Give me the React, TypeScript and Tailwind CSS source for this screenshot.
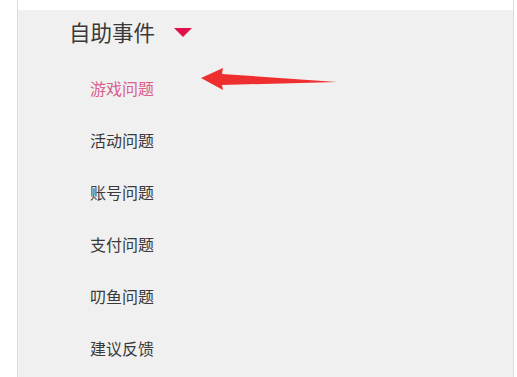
const items = ["游戏问题", "活动问题", "账号问题", "支付问题", "叨鱼问题", "建议反馈"];

export default function App() {
  return (
    <div
      className="h-[377px] w-[517px] overflow-hidden bg-white"
      style={{ fontFamily: '"Noto Sans CJK SC", "Liberation Sans", sans-serif' }}
    >
      <div className="ml-[17px] mr-[3px] flex h-full border-x border-[#dcdcdc] pt-[10px]">
        <div className="relative flex-1 bg-[#f0f0f0] pl-[51px]">
          {/* heading */}
          <div className="flex h-[44px] items-center gap-[19px]">
            <span className="text-[21.5px] text-[#3a3a3a]">自助事件</span>
            <svg width="18" height="10" viewBox="0 0 18 10" className="mt-[2px]">
              <polygon points="0,0 18,0 9,9" fill="#e0104a" />
            </svg>
          </div>

          {/* sub items */}
          <ul className="mt-[8px] flex flex-col pl-[21px]">
            {items.map((label, i) => (
              <li
                key={label}
                className={`flex h-[52px] items-center text-[16px] ${
                  i === 0 ? "text-[#d9608f]" : "text-[#3a3a3a]"
                }`}
              >
                {label}
              </li>
            ))}
          </ul>

          {/* annotation arrow */}
          <svg
            className="absolute left-[182px] top-[56px]"
            width="140"
            height="26"
            viewBox="0 0 140 26"
          >
            <polygon points="1,12 23,2 22,8 137,16 22,19 23,24" fill="#ef2f2f" />
          </svg>
        </div>
      </div>
    </div>
  );
}
